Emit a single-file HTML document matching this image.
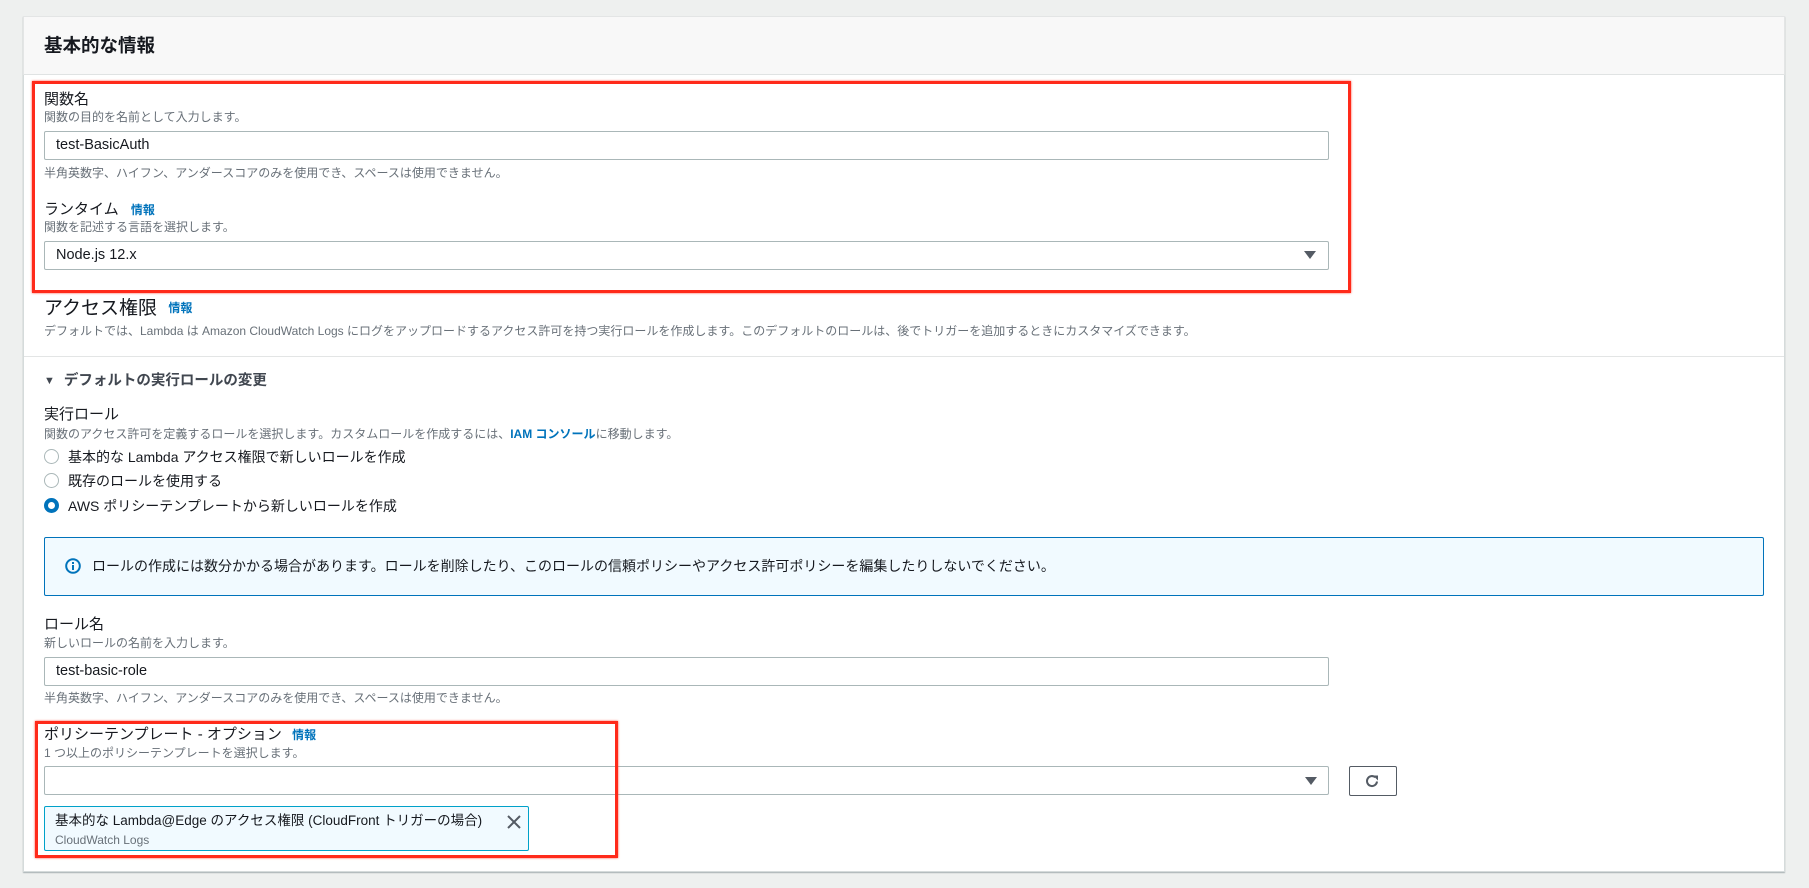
<!DOCTYPE html>
<html><head><meta charset="utf-8"><style>
*{margin:0;padding:0;box-sizing:border-box}
body{width:1809px;height:888px;background:#eef0ef;position:relative;overflow:hidden;font-family:"Liberation Sans","Noto Sans CJK JP",sans-serif;color:#16191f}
.a{position:absolute;white-space:nowrap}
.panel{position:absolute;left:23px;top:16px;width:1762px;height:856px;background:#fff;border:1px solid #d5dbdb;box-shadow:0 1px 1px rgba(0,28,36,.3)}
.hdr{position:absolute;left:23px;top:16px;width:1762px;height:59px;background:#f8f8f8;border:1px solid #e3e5e5;border-bottom:1px solid #e0e3e3}
.lbl{font-size:15px;line-height:18px;color:#16191f}
.desc{font-size:12px;line-height:15px;color:#687078}
.inp{position:absolute;left:44px;width:1285px;height:29px;border:1px solid #aab7b8;border-radius:2px;background:#fff;font-size:14.5px;line-height:27px;padding-left:11px}
.link{color:#0073bb;font-weight:bold;font-size:12px}
.arrow{position:absolute;width:0;height:0;border-left:6px solid transparent;border-right:6px solid transparent;border-top:8px solid #545b64}
.red{position:absolute;border:3px solid #ff2a1a;box-shadow:0 0 2px #ff4a3a}
.radio{position:absolute;left:44px;width:15px;height:15px;border-radius:50%;border:1.5px solid #aab7b8;background:#fff}
.rt{font-size:14px;line-height:18px}
</style></head><body>
<div class="panel"></div>
<div class="hdr"></div>
<div class="a" style="left:44px;top:34px;font-size:18.5px;font-weight:bold;line-height:24px">基本的な情報</div>

<div class="a lbl" style="left:44px;top:91px">関数名</div>
<div class="a desc" style="left:44px;top:110px">関数の目的を名前として入力します。</div>
<div class="inp" style="top:131px">test-BasicAuth</div>
<div class="a desc" style="left:44px;top:166px">半角英数字、ハイフン、アンダースコアのみを使用でき、スペースは使用できません。</div>

<div class="a lbl" style="left:44px;top:201px">ランタイム <span class="link" style="margin-left:8px">情報</span></div>
<div class="a desc" style="left:44px;top:220px">関数を記述する言語を選択します。</div>
<div class="inp" style="top:241px">Node.js 12.x</div>
<div class="arrow" style="left:1304px;top:251px"></div>
<div class="red" style="left:32px;top:81px;width:1319px;height:212px"></div>

<div class="a" style="left:44px;top:296px;font-size:19px;line-height:24px">アクセス権限 <span class="link" style="margin-left:6px;vertical-align:2px">情報</span></div>
<div class="a desc" style="left:44px;top:324px">デフォルトでは、Lambda は Amazon CloudWatch Logs にログをアップロードするアクセス許可を持つ実行ロールを作成します。このデフォルトのロールは、後でトリガーを追加するときにカスタマイズできます。</div>
<div class="a" style="left:24px;top:356px;width:1760px;height:1px;background:#e3e5e5"></div>

<div class="a" style="left:44px;top:372px;font-size:14.5px;font-weight:bold;line-height:18px;color:#414750"><span style="font-size:11px;vertical-align:1px;margin-right:9px">▼</span>デフォルトの実行ロールの変更</div>

<div class="a lbl" style="left:44px;top:406px">実行ロール</div>
<div class="a desc" style="left:44px;top:427px">関数のアクセス許可を定義するロールを選択します。カスタムロールを作成するには、<span class="link">IAM コンソール</span>に移動します。</div>
<div class="radio" style="top:449px"></div>
<div class="a rt" style="left:68px;top:448px">基本的な Lambda アクセス権限で新しいロールを作成</div>
<div class="radio" style="top:473px"></div>
<div class="a rt" style="left:68px;top:472px">既存のロールを使用する</div>
<div class="radio" style="top:498px;border:4px solid #0073bb"></div>
<div class="a rt" style="left:68px;top:497px">AWS ポリシーテンプレートから新しいロールを作成</div>

<div class="a" style="left:44px;top:537px;width:1720px;height:59px;background:#f1faff;border:1px solid #0073bb;border-radius:2px"></div>
<svg class="a" style="left:65px;top:558px" width="16" height="16" viewBox="0 0 16 16"><circle cx="8" cy="8" r="6.8" fill="none" stroke="#0073bb" stroke-width="2"/><rect x="7" y="7" width="2" height="5" fill="#0073bb"/><rect x="7" y="4" width="2" height="2" fill="#0073bb"/></svg>
<div class="a rt" style="left:92px;top:557px">ロールの作成には数分かかる場合があります。ロールを削除したり、このロールの信頼ポリシーやアクセス許可ポリシーを編集したりしないでください。</div>

<div class="a lbl" style="left:44px;top:616px">ロール名</div>
<div class="a desc" style="left:44px;top:636px">新しいロールの名前を入力します。</div>
<div class="inp" style="top:657px">test-basic-role</div>
<div class="a desc" style="left:44px;top:691px">半角英数字、ハイフン、アンダースコアのみを使用でき、スペースは使用できません。</div>

<div class="a lbl" style="left:44px;top:726px">ポリシーテンプレート - オプション <span class="link" style="margin-left:6px">情報</span></div>
<div class="a desc" style="left:44px;top:746px">1 つ以上のポリシーテンプレートを選択します。</div>
<div class="inp" style="top:766px"></div>
<div class="arrow" style="left:1305px;top:777px"></div>
<div class="a" style="left:1349px;top:766px;width:48px;height:30px;border:1px solid #545b64;border-radius:2px;background:#fff"></div>
<svg class="a" style="left:1364px;top:773px" width="16" height="16" viewBox="0 0 16 16"><path d="M13 8.5A5 5 0 1 1 11.3 4.3" fill="none" stroke="#545b64" stroke-width="2"/><path d="M9 2.5h5v5z" fill="#545b64"/></svg>
<div class="a" style="left:44px;top:806px;width:485px;height:45px;background:#f1faff;border:1px solid #00a1c9;border-radius:2px"></div>
<div class="a rt" style="left:55px;top:812px;font-size:13.5px">基本的な Lambda@Edge のアクセス権限 (CloudFront トリガーの場合)</div>
<svg class="a" style="left:507px;top:815px" width="14" height="14" viewBox="0 0 14 14"><path d="M1 1L13 13M13 1L1 13" stroke="#545b64" stroke-width="2"/></svg>
<div class="a desc" style="left:55px;top:833px">CloudWatch Logs</div>
<div class="red" style="left:35px;top:721px;width:583px;height:137px"></div>
</body></html>
